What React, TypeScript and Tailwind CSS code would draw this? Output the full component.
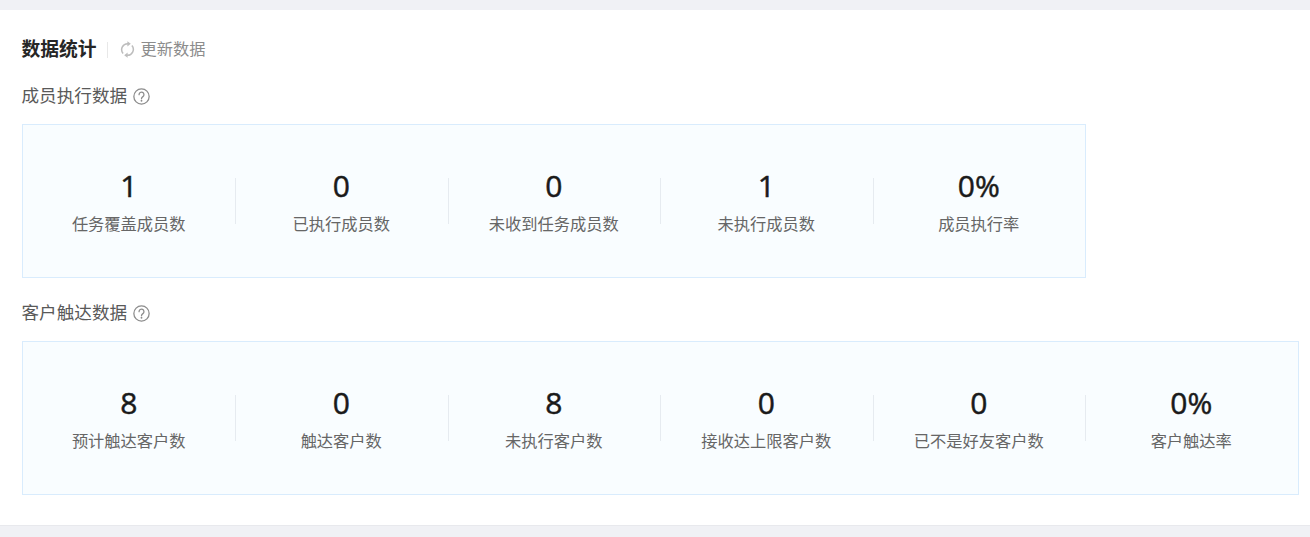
const FONT = "font-['Roboto','Noto_Sans_CJK_SC',sans-serif]";

const memberStats = [
  { value: '1', label: '任务覆盖成员数' },
  { value: '0', label: '已执行成员数' },
  { value: '0', label: '未收到任务成员数' },
  { value: '1', label: '未执行成员数' },
  { value: '0%', label: '成员执行率' },
];

const customerStats = [
  { value: '8', label: '预计触达客户数' },
  { value: '0', label: '触达客户数' },
  { value: '8', label: '未执行客户数' },
  { value: '0', label: '接收达上限客户数' },
  { value: '0', label: '已不是好友客户数' },
  { value: '0%', label: '客户触达率' },
];

function HelpIcon() {
  return (
    <svg width="17" height="17" viewBox="0 0 16 16" fill="none" className="ml-[5.5px] mt-px">
      <circle cx="8" cy="8" r="7.2" stroke="#8c8c8c" strokeWidth="1.2" />
      <path d="M5.7 6.3a2.3 2.3 0 1 1 3.6 1.8c-.9.6-1.3 1-1.3 1.9" stroke="#8c8c8c" strokeWidth="1.2" strokeLinecap="round" />
      <circle cx="8" cy="12" r=".85" fill="#8c8c8c" />
    </svg>
  );
}

function SyncIcon() {
  return (
    <svg width="15" height="17" viewBox="0 0 15 17" fill="none" className="-mt-[2px] ml-[12px]">
      <path d="M3.1 12.4A5.9 5.9 0 0 1 8 2.7" stroke="#bdbdbd" strokeWidth="1.5" />
      <path d="M7.4 0.2v5.2l3.4-2.6z" fill="#bdbdbd" />
      <path d="M11.9 4.6A5.9 5.9 0 0 1 7 14.3" stroke="#bdbdbd" strokeWidth="1.5" />
      <path d="M7.6 16.8v-5.2l-3.4 2.6z" fill="#bdbdbd" />
    </svg>
  );
}

function StatBox({ items, className }: { items: { value: string; label: string }[]; className: string }) {
  return (
    <div className={`flex h-[154px] items-center border border-[#d9ecfd] bg-[#f9fdff] pt-[3px] ${className}`}>
      {items.map((item, i) => (
        <div key={item.label} className="relative w-[212.5px] shrink-0 pr-px text-center">
          <div className="-mt-px font-['Open_Sans',sans-serif] text-[30px] leading-[34px] text-[#1a1a1a] [-webkit-text-stroke:0.5px_#1a1a1a]">{item.value}</div>
          <div className="mt-[11px] text-[16.25px] leading-[22px] text-[#666666]">{item.label}</div>
          {i < items.length - 1 && (
            <div className="absolute right-[-0.9px] top-[8px] h-[46px] w-px bg-[#e6ebf0]" />
          )}
        </div>
      ))}
    </div>
  );
}

export default function App() {
  return (
    <div className={`h-[537px] overflow-hidden bg-[#f0f1f5] pt-[10px] ${FONT}`}>
      <div className="h-[516px] border-b border-[#e8e9ed] bg-white pl-[22px] pr-[11px]">
        <div className="flex h-[76px] items-center pt-[4px]">
          <span className="-ml-[0.5px] text-[18.75px] font-bold leading-6 text-[#262626]">数据统计</span>
          <span className="ml-[10px] h-[16px] w-px bg-[#e8e8e8]" />
          <SyncIcon />
          <span className="ml-[6px] text-[16.25px] leading-6 text-[#8c8c8c]">更新数据</span>
        </div>
        <div className="-mt-[1px] flex h-[22px] items-center">
          <span className="-ml-[0.5px] text-[17.6px] leading-[22px] text-[#595959]">成员执行数据</span>
          <HelpIcon />
        </div>
        <StatBox items={memberStats} className="mt-[17px] w-[1064px]" />
        <div className="mt-[24px] flex h-[22px] items-center">
          <span className="-ml-[0.5px] text-[17.6px] leading-[22px] text-[#595959]">客户触达数据</span>
          <HelpIcon />
        </div>
        <StatBox items={customerStats} className="mt-[17px] w-[1277px]" />
      </div>
    </div>
  );
}
